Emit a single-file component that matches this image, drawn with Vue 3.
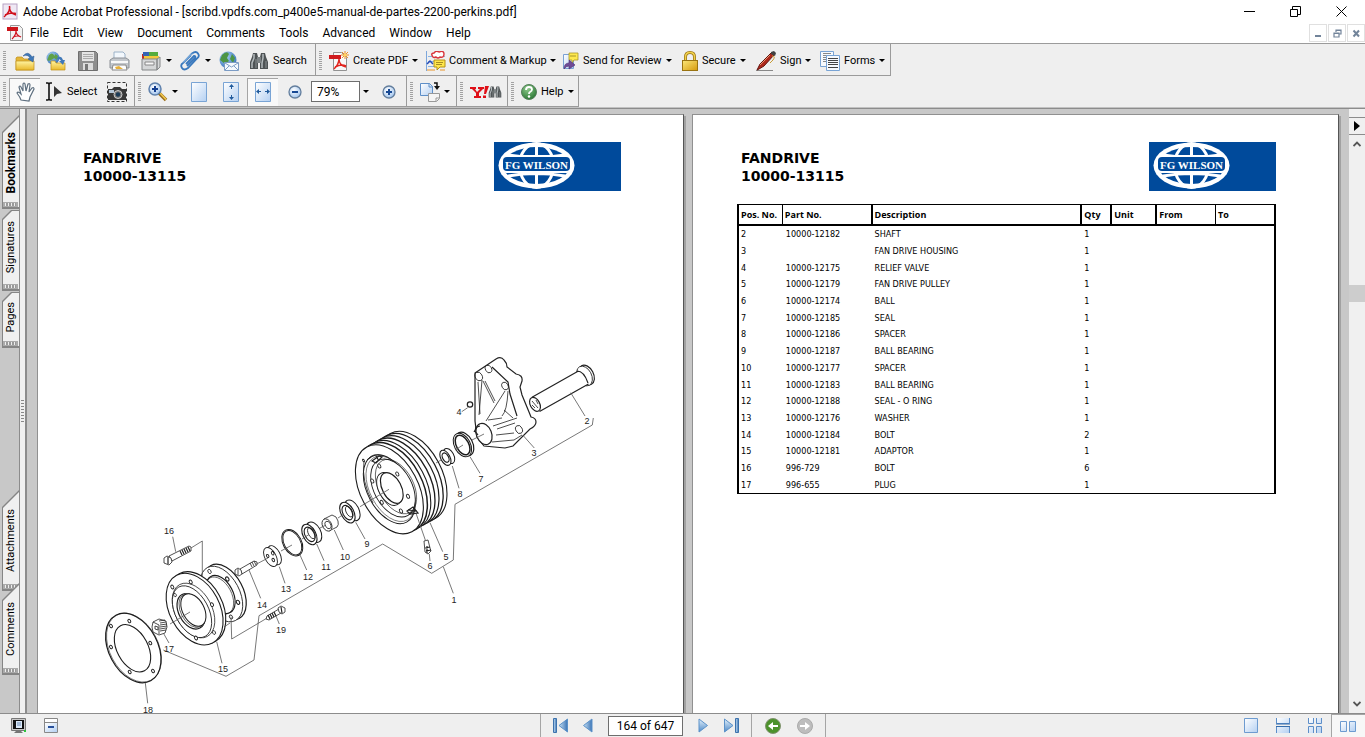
<script setup>
const menus = ['File', 'Edit', 'View', 'Document', 'Comments', 'Tools', 'Advanced', 'Window', 'Help']

const parts = [
  ['2', '10000-12182', 'SHAFT', '1'],
  ['3', '', 'FAN DRIVE HOUSING', '1'],
  ['4', '10000-12175', 'RELIEF VALVE', '1'],
  ['5', '10000-12179', 'FAN DRIVE PULLEY', '1'],
  ['6', '10000-12174', 'BALL', '1'],
  ['7', '10000-12185', 'SEAL', '1'],
  ['8', '10000-12186', 'SPACER', '1'],
  ['9', '10000-12187', 'BALL BEARING', '1'],
  ['10', '10000-12177', 'SPACER', '1'],
  ['11', '10000-12183', 'BALL BEARING', '1'],
  ['12', '10000-12188', 'SEAL - O RING', '1'],
  ['13', '10000-12176', 'WASHER', '1'],
  ['14', '10000-12184', 'BOLT', '2'],
  ['15', '10000-12181', 'ADAPTOR', '1'],
  ['16', '996-729', 'BOLT', '6'],
  ['17', '996-655', 'PLUG', '1'],
]

// Tilted discs: [cx, cy, rx, ry, stroke width, filled]
const discs = {
  gasket: [
    [133.3, 648, 24.4, 37.1, 1.2, 1], [134, 647.6, 24.2, 36.8, 0.5, 0], [132.5, 648.3, 15.5, 25.5, 1.1, 1],
    [129.3, 621, 1.3, 1.9, 1, 1], [111, 626, 1.3, 1.9, 1, 1], [111, 647, 1.3, 1.9, 1, 1],
    [129.7, 672, 1.3, 1.9, 1, 1], [153, 671, 1.3, 1.9, 1, 1], [150.3, 643, 1.3, 1.9, 1, 1],
  ],
  backFlange: [
    [225, 592, 18, 30, 1.2, 1], [221.5, 594, 18, 30, 0.8, 1], [220.5, 594.5, 12.5, 20.5, 1.1, 1],
    [219.5, 595.5, 12, 20, 0.6, 0],
    [209.5, 571.5, 1.5, 2.2, 0.8, 1], [227.3, 579, 1.5, 2.2, 1, 1], [238, 602.3, 1.5, 2.2, 1, 1], [231, 617, 1.5, 2.2, 0.8, 1],
  ],
  hub: [[211, 604, 9, 17, 0.8, 1], [208, 606, 10, 18, 0.6, 1], [205, 607, 11, 19, 0.8, 1]],
  frontFlange: [
    [197.2, 607.6, 25.2, 38.3, 1.1, 1], [194.6, 609.1, 25, 38.3, 1.1, 1],
    [193.5, 610.5, 18.4, 29.4, 0.7, 0], [192, 611.7, 16.6, 28, 0.8, 1], [191, 611.3, 12.2, 19, 1.2, 1],
    [192.2, 610.6, 11.4, 18.2, 0.6, 1], [193.4, 610, 10.8, 17.5, 1, 1],
    [172.3, 587, 1.4, 2, 0.9, 1], [190.7, 582, 1.4, 2, 0.9, 1], [212, 604.7, 1.4, 2, 0.9, 1],
    [214, 632.5, 1.4, 2, 0.8, 1], [196, 638, 1.4, 2, 0.9, 1], [175, 595, 1.2, 1.8, 0.8, 1],
  ],
  washer: [[274.5, 555.2, 5.6, 10.4, 0.9, 1], [270.5, 557, 5.6, 10.4, 0.9, 1], [272.7, 553.3, 1.2, 1.8, 0.9, 0], [267.7, 556, 1.1, 1.7, 0.9, 0], [273.3, 560, 1.2, 1.8, 0.9, 0]],
  oring: [[292.3, 542.7, 9.2, 14.2, 1, 0], [292.3, 542.7, 8.1, 13.1, 0.9, 0]],
  ring11: [[314, 532.2, 6.6, 11, 1, 1], [309.4, 534.5, 6.4, 11, 1.1, 1], [309.6, 534.4, 4.6, 7.8, 1.1, 1], [311.4, 533.2, 3, 6, 0.8, 0]],
  ring9: [[352.4, 510.3, 6.4, 11.2, 1, 1], [347.4, 512.6, 6.4, 11.2, 1.1, 1], [347.4, 512.6, 4.5, 7.8, 1.1, 1], [349.2, 511.6, 3, 5.8, 0.8, 0]],
  pulley: [
    [413, 475.8, 28.8, 48, 1.1, 1], [409.2, 478, 28.8, 48, 1.3, 1], [405, 480.3, 28.8, 48, 1.2, 1],
    [401, 482.6, 28.8, 48, 1.3, 1], [396.8, 485, 28.8, 48, 1.1, 1], [393.4, 487, 28.8, 48, 1.5, 1],
    [389.4, 489.3, 28.8, 48, 1.1, 1], [389.2, 489.3, 21.6, 37.2, 1, 1], [390.6, 488.8, 20.6, 35.4, 0.5, 0],
    [393, 488, 19, 31.2, 0.9, 1], [396, 486.6, 17.4, 29.4, 0.6, 0], [389, 489, 10.3, 17.8, 0.9, 1], [391.8, 488, 9.4, 16.6, 1.2, 1],
    [379.3, 466, 1.4, 2.2, 0.9, 1], [397.3, 474, 1.4, 2.2, 0.9, 1], [372.3, 481, 1.4, 2.2, 0.9, 1],
    [408, 496.3, 1.4, 2.2, 0.9, 1], [381.7, 502.3, 1.4, 2.2, 0.9, 1], [401, 511, 1.4, 2.2, 0.9, 1], [363.5, 460.5, 0.8, 1.4, 0.9, 1],
  ],
  ring8: [[449, 456, 4.8, 8.2, 1, 1], [445.4, 457.8, 4.6, 8.2, 1.1, 1], [445.6, 457.6, 2.9, 5, 1.2, 1]],
  ring7: [[464.6, 444, 8, 12.6, 1.2, 1], [462.4, 445, 8, 12.6, 1, 1], [462.6, 445, 6.2, 10.6, 1.5, 1]],
}
const smallParts = [...discs.washer, ...discs.oring, ...discs.ring11, ...discs.ring9, ...discs.ring8, ...discs.ring7]

const leaders = [
  '593.3,418 592.3,425 455,504.3 453.3,560 431.7,573.3 382.7,544 259,615.7 254,660 226,676.3 163.3,650',
  '443.3,566.7 453.3,593.3', '430,522.7 442.7,551.7', '416,513.3 425.3,540', '429.3,554 430,561',
  '470,456.7 480,473.3', '452.3,466 459,488.3', '355.7,522.3 365,539', '334.3,530 343.3,550',
  '316.7,544 324,560.7', '300,555 306.7,570', '279.3,566.7 285,583.3', '249,570 260.7,598.3',
  '276,616 279.3,624', '216.7,641.7 222,663.3', '145.3,682.7 147.7,703.3', '172.7,536.7 175.7,551.7',
  '191,548 202.3,541 202.3,576', '231,616.7 231.7,639 266.7,618.3', '163.3,633 169,643',
  '570.7,392.7 585,416', '522.7,435 534.3,448', '461.7,411.7 467.7,407.7',
  '389,489.3 360,506.7', '344,514 338,518', '326,525 320,528', '309,534.5 302,539', '292,545 281,551',
  '268,558 256.7,564', '441,460 436,463', '463,445 455,450', '484,434 472,440', '190,612 170,624',
  '224,627 230,623',
]

const callouts = [
  [1, 454, 603], [2, 587, 424], [3, 534, 456], [4, 459, 415], [5, 446, 560], [6, 430, 569], [7, 481, 482],
  [8, 460, 497], [9, 367, 547], [10, 345, 560], [11, 326, 570], [12, 308, 580], [13, 286, 592],
  [14, 262, 608], [15, 223, 672], [16, 169, 534], [17, 169, 652], [18, 148, 713], [19, 281, 633],
]
</script>

<template>
  <div class="window">
    <svg class="defs" width="0" height="0" aria-hidden="true">
      <defs>
        <linearGradient id="folder" x1="0" y1="0" x2="0" y2="1"><stop offset="0" stop-color="#fff3a0" /><stop offset="1" stop-color="#e9b92c" /></linearGradient>
        <linearGradient id="gold" x1="0" y1="0" x2="1" y2="1"><stop offset="0" stop-color="#fbe77a" /><stop offset="1" stop-color="#d69a0c" /></linearGradient>
        <linearGradient id="sheet" x1="0" y1="0" x2="1" y2="1"><stop offset="0" stop-color="#fff" /><stop offset="1" stop-color="#b4d0f2" /></linearGradient>
        <linearGradient id="arrow" x1="0" y1="0" x2="1" y2="0"><stop offset="0" stop-color="#c9e2f5" /><stop offset="1" stop-color="#3b74b5" /></linearGradient>
        <linearGradient id="arrowNext" x1="0" y1="0" x2="0" y2="1"><stop offset="0" stop-color="#e3f1fb" /><stop offset="1" stop-color="#4f8ac8" /></linearGradient>
        <radialGradient id="globe" cx=".35" cy=".3" r=".8"><stop offset="0" stop-color="#a9d1f5" /><stop offset="1" stop-color="#2f6bb5" /></radialGradient>
        <radialGradient id="green" cx=".4" cy=".3" r=".8"><stop offset="0" stop-color="#8cc98a" /><stop offset="1" stop-color="#22702c" /></radialGradient>
        <radialGradient id="lens" cx=".4" cy=".35" r=".8"><stop offset="0" stop-color="#fff" /><stop offset="1" stop-color="#8db8ea" /></radialGradient>
        <symbol id="binoculars" viewBox="0 0 20 20">
          <path d="M3 6l1-4h4l1 4v12H1v-7zM17 6l-1-4h-4l-1 4v12h8v-7z" fill="#4e5355" />
          <path d="M8 6h4v6H8z" fill="#7d8385" />
          <path d="M5 3v4l-2 5v5M14 3v4l-1 5v5" stroke="#b4bbbd" stroke-width="1.500" fill="none" />
          <path d="M7 8v9M17 10v7" stroke="#8b9294" fill="none" />
        </symbol>
        <symbol id="brand" viewBox="0 0 127 49">
          <rect width="127" height="49" fill="#004a9b" />
          <ellipse cx="42.5" cy="23.5" rx="38" ry="23" fill="#fff" />
          <ellipse cx="42.5" cy="23.5" rx="33.5" ry="18.5" fill="#004a9b" />
          <g fill="none" stroke="#fff" stroke-width="3">
            <ellipse cx="42.5" cy="23.5" rx="17" ry="22" />
            <path d="M42.5 2v43M14 13q28.500 5 57 0M14 34q28.500-5 57 0" />
          </g>
          <rect x="7" y="13" width="71" height="18" rx="5" fill="#fff" />
          <rect x="9" y="15" width="67" height="14" rx="4" fill="#004a9b" />
          <text x="42.500" y="27" text-anchor="middle" class="brand-text">FG WILSON</text>
        </symbol>
      </defs>
    </svg>

    <header class="titlebar">
      <svg width="17" height="17" viewBox="0 0 17 17" aria-hidden="true">
        <rect x="1" y="1" width="14" height="15" fill="#efe8f4" stroke="#b7a2c4" />
        <path d="M7.500 3c1 3-1 7-5.500 11M7.500 3C7 8 10 11 14 12M3 12c4-2 7-2.500 11-1.500" fill="none" stroke="#d0101c" stroke-width="1.5" />
      </svg>
      <h1 class="title">Adobe Acrobat Professional - [scribd.vpdfs.com_p400e5-manual-de-partes-2200-perkins.pdf]</h1>
      <div class="window-controls">
        <button type="button" aria-label="Minimize"><svg width="11" height="11" viewBox="0 0 11 11"><path d="M0 5.500h11" stroke="#000" /></svg></button>
        <button type="button" aria-label="Restore"><svg width="11" height="11" viewBox="0 0 11 11"><path d="M.5 3.500h7v7h-7zM2.500 3.500v-3h8v8h-3" fill="none" stroke="#000" /></svg></button>
        <button type="button" aria-label="Close"><svg width="11" height="11" viewBox="0 0 11 11"><path d="M.5.5l10 10M10.500.5l-10 10" stroke="#000" /></svg></button>
      </div>
    </header>

    <nav class="menubar">
      <svg width="16" height="16" viewBox="0 0 16 16" aria-hidden="true">
        <path d="M3.500.5h9l3 3v12h-12z" fill="#f2f2f2" stroke="#999" />
        <rect y="2" width="11" height="4" fill="#cc1419" />
        <path d="M9 6c0 3-2 6-4 8M9 6c0 4 2 5 5 6M6 12c3-1 5-2 8 0" fill="none" stroke="#d0101c" stroke-width="1.2" />
      </svg>
      <button v-for="m in menus" :key="m" type="button">{{ m }}</button>
      <div class="mdi-controls">
        <button type="button" aria-label="Minimize document"><svg width="9" height="9" viewBox="0 0 9 9"><path d="M1 7h6" stroke="#72849a" stroke-width="2" /></svg></button>
        <button type="button" aria-label="Restore document"><svg width="9" height="9" viewBox="0 0 9 9"><path d="M1 4h5v4H1zM3 3V1h5v4H6M3 1.500h5M1 4.500h5" fill="none" stroke="#72849a" stroke-width="1.200" /></svg></button>
        <button type="button" aria-label="Close document"><svg width="9" height="9" viewBox="0 0 9 9"><path d="M1.500 1.500l5.500 6M7 1.500l-5.500 6" stroke="#72849a" stroke-width="2" /></svg></button>
      </div>
    </nav>

    <div class="toolbars">
      <div class="toolbar">
        <div class="group files">
          <i class="grip"></i>
          <button type="button" aria-label="Open" class="tool first"><svg width="20" height="20" viewBox="0 0 20 20"><path d="M1 19V7l1-1h5l2 2h9v11z" fill="#e3b63a" stroke="#c08f19" stroke-width=".7" /><path d="M1 19V10h18v9z" fill="url(#folder)" stroke="#c08f19" stroke-width=".7" /><path d="M8 5q5-6 9 1l2-1-1 6-5-3 2-1q-2-4-7-2z" fill="#3f78b8" stroke="#28558c" stroke-width=".5" /></svg></button>
          <button type="button" aria-label="Open web page" class="tool"><svg width="21" height="20" viewBox="0 0 21 20"><circle cx="7" cy="7" r="6.500" fill="url(#globe)" /><path d="M3 4q3-3 5 0t-3 5-3-2zM9 3l3 2-1 4-3-2z" fill="#5ea149" /><path d="M5 19v-9h4l1 2h9v7z" fill="url(#folder)" stroke="#c08f19" stroke-width=".7" /><path d="M10 8q5-5 7 1h2l-2 5-4-4h2q-1-3-5-2z" fill="#3f78b8" /></svg></button>
          <button type="button" aria-label="Save" class="tool"><svg width="20" height="20" viewBox="0 0 20 20"><path d="M.5.500h17l2 2v17H.5z" fill="#8f8f8f" stroke="#6e6e6e" /><path d="M4 1h12v9H4z" fill="#e4e4e4" /><path d="M5 3.500h10M5 5.500h10M5 7.500h10" stroke="#aaa" /><path d="M5 12h10v7H5z" fill="#ddd" /><path d="M7 13h3v6H7z" fill="#777" /></svg></button>
          <button type="button" aria-label="Print" class="tool"><svg width="21" height="20" viewBox="0 0 21 20"><path d="M5 9V1h9l2 2v6z" fill="#f3f8fd" stroke="#9cb2c8" /><path d="M1 9l3-2h13l3 2v8H1z" fill="#c3c7cc" stroke="#8c9197" /><path d="M2 11h17" stroke="#f8f8f8" stroke-width="2" /><path d="M4 14h13l1 5H3z" fill="#fdfdfd" stroke="#888" /><path d="M6 16l4-1 4 3H7z" fill="#e7b03a" /></svg></button>
          <button type="button" aria-label="Organizer" class="tool dropdown organizer"><svg width="20" height="20" viewBox="0 0 20 20"><path d="M1 3h7v5H1z" fill="#c32b24" /><path d="M2 1h6v4H2z" fill="#3564b5" /><path d="M8 1h9v5H8z" fill="#56ac3e" /><path d="M3 5h15v4H3z" fill="#f3c83e" /><path d="M1 8h15v11H1zM16 8l3-2v10l-3 3z" fill="#d5d7d8" stroke="#858889" /><path d="M4 11h9v3H4z" fill="#f8f8f8" stroke="#888" /></svg><i class="caret"></i></button>
          <button type="button" aria-label="Attach" class="tool dropdown clip"><svg width="20" height="20" viewBox="0 0 20 20"><path d="M3 12L12 2.500q4-3 6 0t-1 5L8 17q-4 3-6 0t1-5l8-8M6 13l8-8q2 0 1 2l-8 8" fill="none" stroke="#3978bd" stroke-width="1.800" /><path d="M3 11.500l9-9" stroke="#a8ccee" /></svg><i class="caret"></i></button>
          <button type="button" aria-label="Email" class="tool email"><svg width="20" height="20" viewBox="0 0 20 20"><circle cx="9" cy="9" r="8.500" fill="url(#globe)" /><path d="M3 4q5-5 7-1l-2 4 2 3-4 3-5-4zM13 3l3 4-2 5-3-4z" fill="#4d9544" /><path d="M5.500 11.500h14v8h-14z" fill="#f5f9fe" stroke="#7c9cc5" /><path d="M6 12l6.500 4 6.500-4M6 19l4-4M19 19l-4-4" fill="none" stroke="#7c9cc5" /></svg></button>
          <button type="button" class="tool"><svg width="20" height="20"><use href="#binoculars" /></svg><span>Search</span></button>
        </div>
        <div class="group tasks">
          <i class="grip"></i>
          <button type="button" class="tool dropdown create"><svg width="20" height="20" viewBox="0 0 20 20"><path d="M4.500 1.500h8l5 5v13h-13z" fill="#f8f8f8" stroke="#929292" /><path d="M0 4h12v4H0z" fill="#d01b1e" /><path d="M10 8c0 4-2 7-5 10M10 8c0 5 3 7 7 8M6 16c4-2 7-3 11-1" fill="none" stroke="#e1251f" stroke-width="1.500" /><path d="M16 0v8M12 4h8M13 1l6 6M19 1l-6 6" stroke="#ee8e27" /><circle cx="16" cy="4" r="1.500" fill="#ffd65b" /></svg><span>Create PDF</span><i class="caret"></i></button>
          <button type="button" class="tool dropdown comment"><svg width="20" height="20" viewBox="0 0 20 20"><path d="M.5 0v20" stroke="#7da7db" /><path d="M2 5.500h17M2 10.500h17M2 15.500h17" stroke="#8ab3e5" /><path d="M7 6q-3-4 1-4 2-3 5-1 5-2 5 2 0 4-4 3-2 2-4 0-2 1-3 0z" fill="#fff" stroke="#d8333a" stroke-width="1.400" /><path d="M1 13l3-3 3 3" fill="none" stroke="#244ab7" stroke-width="1.500" /><path d="M8 9h11v7h-5l-3 3v-3H8z" fill="#ffe64a" stroke="#b49218" /><path d="M10 11.500h7M10 13.500h6" stroke="#a78d24" /><path d="M1 19h8M14 19h5" stroke="#edc28b" stroke-width="2" /></svg><span>Comment &amp; Markup</span><i class="caret"></i></button>
          <button type="button" class="tool dropdown send"><svg width="16" height="18" viewBox="0 0 16 18"><path d="M.5 2.500h10v14H.5z" fill="url(#sheet)" stroke="#7aa1d4" /><path d="M6 1h9v7h-4l-2 3V8H6z" fill="#ffe94d" stroke="#a8972a" stroke-width=".8" /><path d="M7 4h6" stroke="#a8972a" /><path d="M1 17q0-6 5-6V8l6 5-6 4v-3q-3 0-5 3z" fill="#704b96" stroke="#4b2b72" stroke-width=".6" /></svg><span>Send for Review</span><i class="caret"></i></button>
          <button type="button" class="tool dropdown secure"><svg width="16" height="20" viewBox="0 0 16 20"><path d="M3.500 11V6q0-4.500 4.500-4.500T12.500 6v5" fill="none" stroke="#9a7412" stroke-width="3" /><path d="M3.500 11V6q0-4.500 4.500-4.500T12.500 6v5" fill="none" stroke="#f0d04d" stroke-width="1.500" /><rect x=".5" y="9.500" width="15" height="10" fill="url(#gold)" stroke="#9a7412" /></svg><span>Secure</span><i class="caret"></i></button>
          <button type="button" class="tool dropdown sign"><svg width="20" height="20" viewBox="0 0 20 20"><path d="M0 19.500h17" stroke="#888" /><path d="M1 19l3-6L15 2l3 2-10 11-5 3z" fill="#ad281c" stroke="#651610" /><path d="M4 14l10-10" stroke="#e99675" /><path d="M15 1l3-1 2 2-1 3-4-2z" fill="#414141" /><path d="M16 5q4 0 1 4l-3 3" fill="none" stroke="#c99c37" /></svg><span>Sign</span><i class="caret"></i></button>
          <button type="button" class="tool dropdown"><svg width="20" height="20" viewBox="0 0 20 20"><path d="M.5.5h13v15H.5z" fill="#f7fafe" stroke="#79a4d5" /><path d="M3 2.500h8M3 4.500h8M3 6.500h8M3 8.500h8M3 10.500h8" stroke="#888" /><path d="M6.500 4.500h13v15h-13z" fill="#f7fafe" stroke="#79a4d5" /><path d="M8 7.500h10M8 9.500h10M8 11.500h10M8 13.500h10M8 16.500h10" stroke="#444" /></svg><span>Forms</span><i class="caret"></i></button>
        </div>
      </div>

      <div class="toolbar">
        <div class="group basic">
          <i class="grip"></i>
          <button type="button" aria-label="Hand tool" class="tool pressed"><svg width="19" height="20" viewBox="0 0 19 20"><path d="M5 18q-1-3-4-7 1-2 4 1L3 5q1-2 2 0l2 4V2q1-2 2 0l1 7 2-7q2-1 2 1l-1 7 3-4q2-1 2 1l-4 8-1 4z" fill="#fff" stroke="#5e6f7f" stroke-width="1.200" /></svg></button>
          <button type="button" class="tool select"><svg width="18" height="19" viewBox="0 0 18 19"><path d="M1 1h2l1 1 1-1h2M4 2v15M1 18h2l1-1 1 1h2" fill="none" stroke="#111" stroke-width="1.600" /><path d="M9 4v11l3-3 5-1z" fill="#333" /></svg><span>Select</span></button>
          <button type="button" aria-label="Snapshot" class="tool"><svg width="20" height="20" viewBox="0 0 20 20"><path d="M.5.5h19v19H.5z" fill="none" stroke="#333" stroke-dasharray="3 2" /><path d="M1 7h4l2-2h6l2 2h4v11H1z" fill="#383838" /><path d="M2 8h5v3H2z" fill="#b6c8d9" /><circle cx="11" cy="12.500" r="4" fill="#777" stroke="#ccc" /><circle cx="11" cy="12.500" r="2.200" fill="#1b3b58" /></svg></button>
        </div>
        <div class="group zooming">
          <i class="grip"></i>
          <button type="button" aria-label="Zoom" class="tool dropdown zoomer"><svg width="20" height="20" viewBox="0 0 20 20"><path d="M11 11l7 7" stroke="#9a6e1b" stroke-width="3.500" /><path d="M12 11l6 6.500" stroke="#f2c84e" stroke-width="1.600" /><circle cx="7" cy="7" r="6" fill="url(#lens)" stroke="#6082ad" stroke-width="1.500" /><path d="M4 7h6M7 4v6" stroke="#143f91" stroke-width="2" /></svg><i class="caret"></i></button>
          <button type="button" aria-label="Actual size" class="tool sheet"><svg width="16" height="20" viewBox="0 0 16 20"><path d="M.5.5h15v19H.5z" fill="url(#sheet)" stroke="#79a4d5" /></svg></button>
          <button type="button" aria-label="Fit page" class="tool sheet"><svg width="16" height="20" viewBox="0 0 16 20"><path d="M.5.5h15v19H.5z" fill="url(#sheet)" stroke="#79a4d5" /><path d="M8.500 3v4M8.500 13v4" stroke="#225c9d" /><path d="M6 5l2.500-3L11 5zM6 15l2.500 3 2.500-3z" fill="#225c9d" /></svg></button>
          <button type="button" aria-label="Fit width" class="tool pressed"><svg width="16" height="20" viewBox="0 0 16 20"><path d="M.5.5h15v19H.5z" fill="url(#sheet)" stroke="#79a4d5" /><path d="M2 9.500h4M10 9.500h4" stroke="#225c9d" /><path d="M4 7L1 9.500 4 12zM12 7l3 2.500-3 2.500z" fill="#225c9d" /></svg></button>
          <button type="button" aria-label="Zoom out" class="tool step"><svg width="14" height="14" viewBox="0 0 14 14"><circle cx="7" cy="7" r="6" fill="url(#lens)" stroke="#637e9d" stroke-width="1.300" /><path d="M4 7h6" stroke="#174994" stroke-width="2" /></svg></button>
          <input class="zoom-value" type="text" value="79%" aria-label="Zoom level">
          <button type="button" aria-label="Zoom levels" class="tool levels"><i class="caret"></i></button>
          <button type="button" aria-label="Zoom in" class="tool"><svg width="14" height="14" viewBox="0 0 14 14"><circle cx="7" cy="7" r="6" fill="url(#lens)" stroke="#637e9d" stroke-width="1.300" /><path d="M4 7h6M7 4v6" stroke="#174994" stroke-width="2" /></svg></button>
        </div>
        <div class="group rotate">
          <i class="grip"></i>
          <button type="button" aria-label="Rotate" class="tool dropdown"><svg width="20" height="20" viewBox="0 0 20 20"><path d="M.5 1.500h9l3 3v9H.5z" fill="url(#sheet)" stroke="#5e8fc8" /><path d="M9 1v4h4" fill="none" stroke="#5e8fc8" /><path d="M8.500 11.500h11v5l-3 3h-8z" fill="#f5f5f5" stroke="#999" /><path d="M16 19v-3h3" fill="none" stroke="#999" /><path d="M14 1h3v4" fill="none" stroke="#111" stroke-width="1.500" /><path d="M14 4h6l-3 4z" fill="#111" /></svg><i class="caret"></i></button>
        </div>
        <div class="group yahoo">
          <i class="grip"></i>
          <button type="button" aria-label="Yahoo search" class="tool"><svg width="32" height="14" viewBox="0 0 32 14"><path d="M0 2h6v2H5l2 3 3-3H8V2h6v2h-1L9 8v3h2v2H4v-2h2V8L2 4H0z" fill="#df1018" /><path d="M15 1h4l-3 8h-2zM13 10.500h3v2.500h-3z" fill="#df1018" /><svg x="18" y="0" width="14" height="14"><use href="#binoculars" /></svg></svg></button>
        </div>
        <div class="group help">
          <i class="grip"></i>
          <button type="button" class="tool dropdown"><svg width="16" height="16" viewBox="0 0 16 16"><circle cx="8" cy="8" r="7.500" fill="url(#green)" stroke="#557f5a" /><path d="M5 6q0-3 3-3t3 2.500Q11 7 9 8q-1 .5-1 2" fill="none" stroke="#fff" stroke-width="1.800" /><circle cx="8" cy="12.500" r="1.200" fill="#fff" /></svg><span>Help</span><i class="caret"></i></button>
        </div>
      </div>
    </div>

    <main class="workspace">
      <aside class="sidebar">
        <button type="button" class="tab bookmarks"><span>Bookmarks</span></button>
        <button type="button" class="tab signatures short"><span>Signatures</span></button>
        <button type="button" class="tab pages short"><span>Pages</span></button>
        <button type="button" class="tab attachments"><span>Attachments</span></button>
        <button type="button" class="tab comments"><span>Comments</span></button>
      </aside>
      <div class="splitter"><i></i></div>

      <div class="document">
        <section class="page">
          <div class="page-head">
            <h2>FANDRIVE<br>10000-13115</h2>
            <svg class="brand" viewBox="0 0 127 49" role="img" aria-label="FG Wilson"><use href="#brand" /></svg>
          </div>
          <svg class="diagram" viewBox="38 191 645 523" role="img" aria-label="Exploded view of the fan drive">
            <g v-for="k in ['gasket', 'backFlange', 'hub', 'frontFlange', 'pulley']" :key="k">
              <ellipse v-for="(d, i) in discs[k]" :key="i" :cx="d[0]" :cy="d[1]" :rx="d[2]" :ry="d[3]" :transform="`rotate(-28 ${d[0]} ${d[1]})`" :stroke-width="d[4]" :fill="d[5] ? '#fff' : 'none'" stroke="#1c1c1c" />
            </g>
            <ellipse v-for="(d, i) in smallParts" :key="i" :cx="d[0]" :cy="d[1]" :rx="d[2]" :ry="d[3]" :transform="`rotate(-28 ${d[0]} ${d[1]})`" :stroke-width="d[4]" :fill="d[5] ? '#fff' : 'none'" stroke="#1c1c1c" />

            <g class="ink">
              <!-- oil passages inside the pulley -->
              <path d="M372 461l7-5 3 1-6 6zM376 456l3 5M413 507l5 6-8 1-3-3zM408 510l9 1M410 513l6-2" class="bold" />
              <path d="M364 461q-3 20 9 42M367 460q6-8 16-4" />
              <!-- plug 17 -->
              <path d="M153 622l6-3 7 2 1 6-2 6-6 2-6-3-1-5z" class="solid" />
              <path d="M153 622l6 3v9M160 623l6-1M160 625l7-1M160 627l7-1M160 629l6-1M160 631l6-1M159 621l6-1M155 626l3 1v3l-3-1z" />
              <!-- spacer 10 -->
              <path d="M324 519l8-4q5 1 6 6 1 4-1 6l-8 4z" class="solid" />
              <ellipse cx="327" cy="525" rx="4.500" ry="6.500" transform="rotate(-28 327 525)" class="solid" />
              <ellipse cx="328" cy="525" rx="2.600" ry="4" transform="rotate(-28 328 525)" />
              <!-- bolt 14 -->
              <path d="M240 569l14-8 3 1 0 3-15 9z" class="solid" />
              <path d="M235 570l3-2 3 2 1 4-3 2-4-2zM250 563l2 4M252 562l2 4M254 561l2 4M238 569v6" class="solid" />
              <!-- bolt 16 -->
              <path d="M169 556l20-10 2 1v4l-19 10z" class="solid" />
              <path d="M164 558l3-2 4 2 1 4-3 3-5-2z" class="solid" />
              <path d="M180 551l2 4M182 550l2 4M184 549l2 4M186 548l2 4M188 547l2 4M168 557v7" class="bold" />
              <!-- bolt 19 -->
              <path d="M267 616l12-7 2 4-12 7-3-1z" class="solid" />
              <path d="M278 608l3-2 4 2v4l-3 2-3-2z" class="solid" />
              <path d="M268 615l2 4M270 614l2 4M272 613l2 4M274 612l2 4M281 607l1 6" class="bold" />
              <!-- valve 6 -->
              <path d="M424 541l4-1 2 8 1 3-3 3-3-2z" class="solid" />
              <path d="M425 548l5-1M426 551l5-1M427 546v7" class="bold" />
              <!-- ball 4 -->
              <circle cx="470" cy="404.500" r="2.700" class="bold" />
              <!-- shaft 2 -->
              <ellipse cx="586.500" cy="375" rx="7" ry="10.500" transform="rotate(-28 586.500 375)" class="solid bold" />
              <ellipse cx="584.500" cy="376" rx="7" ry="10.500" transform="rotate(-28 584.500 376)" class="solid" />
              <path d="M532 397.300l46-26q7 0 10 13l-49 27.500z" fill="#fff" stroke="none" />
              <path d="M532 397.300l46-26M539.500 411.500l49-27.500M577 371q7 0 11 12" class="bold" />
              <ellipse cx="535" cy="404.300" rx="4.700" ry="7.500" transform="rotate(-28 535 404.300)" class="solid bold" />
              <path d="M532 401l6 7M532 405l3 3M536 400l2 4" />
              <!-- housing 3 -->
              <path d="M475 373l21-14q5-3 8 1 3 3 3 7l9 7q7 1 6 7l-2 6 2 8 7 17 2 5q5 1 5 5t-6 7l-17 17-8 2-21-2-7-9-2-16z" class="solid bold" />
              <ellipse cx="478.700" cy="376.500" rx="3.500" ry="4.500" transform="rotate(-28 478.700 376.500)" />
              <ellipse cx="488.500" cy="369" rx="3" ry="4" transform="rotate(-28 488.500 369)" />
              <ellipse cx="505" cy="386" rx="3" ry="4" transform="rotate(-28 505 386)" />
              <ellipse cx="519" cy="429.500" rx="3.200" ry="4.200" transform="rotate(-28 519 429.500)" />
              <path d="M492 367l16 15 2 12 7 22" class="bold" />
              <path d="M478 382l2 32M482 380l-3 35M483 381l11 22M485 381l10 20M505 391l-19 30M508 391q-1 20-6 25M493 426l24-8M497 429l18-6M496 435l18-2M504 410l9 8M488 420l14-2" />
              <path d="M492 442l22-2 8-5" />
              <ellipse cx="484" cy="434" rx="7.600" ry="11" transform="rotate(-22 484 434)" class="solid bold" />
              <path d="M476 427l-1 4 3 4M474 432l3-5 3-1" class="bold" />
            </g>

            <polyline v-for="(l, i) in leaders" :key="i" :points="l" class="leader" />
            <text v-for="c in callouts" :key="c[0]" :x="c[1]" :y="c[2]" text-anchor="middle" class="callout">{{ c[0] }}</text>
          </svg>
        </section>

        <section class="page">
          <div class="page-head second">
            <h2>FANDRIVE<br>10000-13115</h2>
            <svg class="brand" viewBox="0 0 127 49" role="img" aria-label="FG Wilson"><use href="#brand" /></svg>
          </div>
          <div class="parts-wrap">
            <table class="parts">
              <thead>
                <tr><th class="pos">Pos. No.</th><th class="part thin">Part No.</th><th class="desc">Description</th><th class="qty">Qty</th><th class="unit">Unit</th><th class="from">From</th><th class="thin">To</th></tr>
              </thead>
              <tbody>
                <tr v-for="p in parts" :key="p[0]"><td>{{ p[0] }}</td><td>{{ p[1] }}</td><td>{{ p[2] }}</td><td>{{ p[3] }}</td><td></td><td></td><td></td></tr>
              </tbody>
            </table>
          </div>
        </section>
      </div>

      <div class="scrollbar">
        <div class="scroll-cap"></div>
        <button type="button" class="how-to" aria-label="Show pane"><svg width="6" height="10" viewBox="0 0 6 10"><path d="M0 0l6 5-6 5z" /></svg></button>
        <button type="button" class="scroll-arrow" aria-label="Scroll up"><svg width="8" height="6" viewBox="0 0 8 6"><path d="M.5 5L4 1.500 7.500 5" fill="none" stroke="#555" stroke-width="1.800" /></svg></button>
        <div class="track"><div class="thumb"></div></div>
        <button type="button" class="scroll-arrow" aria-label="Scroll down"><svg width="8" height="6" viewBox="0 0 8 6"><path d="M.5 1L4 4.500 7.500 1" fill="none" stroke="#555" stroke-width="1.800" /></svg></button>
      </div>
    </main>

    <footer class="statusbar">
      <div class="status-left">
        <button type="button" aria-label="Full screen"><svg width="16" height="16" viewBox="0 0 16 16"><path d="M.5.5h14v12H.5z" fill="#c9c9c9" stroke="#777" /><path d="M2 2h11v9H2z" fill="#111" /><path d="M5 3h6v7H5z" fill="#dce9f8" /><path d="M6 5h4M6 7h4" stroke="#6b8ab2" /><path d="M5 13h5l2 2H3z" fill="#777" /><path d="M13 13h2" stroke="#2cc43c" stroke-width="2" /></svg></button>
        <button type="button" aria-label="Hide toolbars"><svg width="14" height="15" viewBox="0 0 14 15"><path d="M.5.500h13v14H.5z" fill="#fff" stroke="#888" /><path d="M1 5h12v9H1z" fill="url(#sheet)" /><path d="M1 4.500h12" stroke="#888" /><path d="M4 9h6" stroke="#274f9b" stroke-width="2" /></svg></button>
      </div>
      <div class="navigation">
        <button type="button" aria-label="First page"><svg width="16" height="15" viewBox="0 0 16 15"><path d="M.5.5h3v14h-3z" fill="url(#arrow)" stroke="#3d72ad" /><path d="M14.500 1v13L6 7.500z" fill="url(#arrow)" stroke="#5c92c9" /></svg></button>
        <button type="button" aria-label="Previous page"><svg width="10" height="15" viewBox="0 0 10 15"><path d="M9 1v13L.5 7.500z" fill="url(#arrow)" stroke="#5c92c9" /></svg></button>
        <input type="text" value="164 of 647" aria-label="Page">
        <button type="button" aria-label="Next page"><svg width="10" height="15" viewBox="0 0 10 15"><path d="M1 1v13l8.500-6.500z" fill="url(#arrowNext)" stroke="#5c92c9" /></svg></button>
        <button type="button" aria-label="Last page"><svg width="16" height="15" viewBox="0 0 16 15"><path d="M1.500 1v13L10 7.500z" fill="url(#arrowNext)" stroke="#5c92c9" /><path d="M12.500.5h3v14h-3z" fill="url(#arrow)" stroke="#3d72ad" /></svg></button>
      </div>
      <div class="history">
        <button type="button" aria-label="Previous view"><svg width="16" height="16" viewBox="0 0 16 16"><circle cx="8" cy="8" r="7.500" fill="#4c922c" stroke="#80936f" /><path d="M3 8l5-4v3h5v2H8v3z" fill="#fff" /></svg></button>
        <button type="button" aria-label="Next view"><svg width="16" height="16" viewBox="0 0 16 16"><circle cx="8" cy="8" r="7.500" fill="#bdbdbd" stroke="#aaa" /><path d="M13 8L8 4v3H3v2h5v3z" fill="#fff" /></svg></button>
      </div>
      <div class="layouts">
        <button type="button" aria-label="Single page"><svg width="14" height="15" viewBox="0 0 14 15"><path d="M.5.500h13v14H.5z" fill="url(#sheet)" stroke="#6d9bd0" /></svg></button>
        <button type="button" aria-label="Continuous"><svg width="14" height="15" viewBox="0 0 14 15"><path d="M.5 0v5.500h13V0M.5 15V8.500h13V15" fill="url(#sheet)" stroke="#5c8ec9" /><path d="M0 6h14M0 8.500h14" stroke="#356dac" /></svg></button>
        <button type="button" aria-label="Continuous facing"><svg width="14" height="15" viewBox="0 0 14 15"><path d="M.5 0v5.500h5V0M8.500 0v5.500h5V0M.5 15V8.500h5V15M8.500 15V8.500h5V15" fill="url(#sheet)" stroke="#5c8ec9" /></svg></button>
        <button type="button" aria-label="Facing" class="active"><svg width="16" height="11" viewBox="0 0 16 11"><path d="M.5.500h6v10h-6zM9.500.500h6v10h-6z" fill="url(#sheet)" stroke="#6d9bd0" /></svg></button>
      </div>
    </footer>
  </div>
</template>

<style>
html, body { margin: 0; }
body { overflow: hidden; }
</style>

<style scoped>
.window { display: flex; flex-direction: column; height: 100vh; background: #fff; color: #000; font: 11px Roboto, sans-serif; }
.defs { position: absolute; }
svg { display: block; flex: none; }
button { display: flex; align-items: center; padding: 0; border: 0; background: none; color: inherit; font: inherit; white-space: nowrap; }
input { box-sizing: border-box; border: 1px solid #6e6e6e; background: #fff; color: #000; font: 12px Roboto, sans-serif; }

.titlebar { display: flex; align-items: center; height: 23px; padding-left: 2px; }
.title { margin: 0 0 0 4px; font: 12px/20px Roboto, sans-serif; white-space: nowrap; }
.window-controls { display: flex; gap: 35px; margin-left: auto; padding-right: 18px; }

.menubar { display: flex; align-items: center; gap: 14px; height: 20px; padding-left: 7px; font: 12px Roboto, sans-serif; }
.menubar > svg { margin-right: -7px; }
.mdi-controls { display: flex; gap: 1px; margin-left: auto; }
.mdi-controls button { box-sizing: border-box; justify-content: center; width: 18px; height: 18px; border: 1px solid #e0e0e0; }

.toolbars { border-top: 1px solid #9b9b9b; border-bottom: 1px solid #8c8c8c; background: #efefef; }
.toolbar { display: flex; height: 31px; }
.toolbar + .toolbar { height: 32px; border-bottom: 1px solid #c2c2c2; }
.group { box-sizing: border-box; display: flex; align-items: center; height: 32px; padding: 2px 0 0 3px; border-right: 1px solid #9b9b9b; border-bottom: 1px solid #9b9b9b; }
.grip { flex: none; width: 3px; height: 20px; background: repeating-linear-gradient(#a2a2a2 0 1px, #efefef 1px 2px); }
.caret { flex: none; width: 0; height: 0; border: solid transparent; border-width: 3px 3px 0; border-top-color: #000; }
.tool { flex: none; gap: 4px; }
.files { width: 316px; }
.files .tool { margin-right: 11px; }
.files .tool.first { margin-left: 9px; }
.files .organizer, .files .clip { gap: 5px; width: 30px; margin-right: 9px; }
.files .email { margin-right: 10px; }
.tasks { width: 575px; }
.tasks .tool { gap: 4px; margin-right: 9px; }
.tasks .create { width: 88px; margin-left: 7px; }
.tasks .comment { gap: 3px; width: 130px; margin-right: 7px; }
.tasks .send { width: 110px; }
.tasks .secure { width: 65px; }
.tasks .sign { width: 55px; }

.basic { width: 135px; }
.pressed { box-sizing: border-box; justify-content: center; width: 31px; height: 28px; border: solid #a5a5a5; border-width: 1px 0 0 1px; background: #f9f9f9; }
.basic .pressed { margin-left: 3px; }
.basic .select { margin: 0 10px 0 5px; }
.zooming { width: 272px; }
.zoomer { gap: 4px; width: 31px; margin: 0 12px 0 7px; }
.sheet { margin-right: 16px; }
.sheet + .sheet { margin-right: 8px; }
.step { margin: 0 9px 0 10px; }
.zoom-value { width: 49px; height: 21px; padding: 0 5px; }
.levels { margin: 0 13px 0 3px; }
.rotate { width: 50px; }
.rotate .tool { margin-left: 7px; }
.yahoo { width: 51px; }
.yahoo .tool { margin-left: 7px; }
.help { width: 71px; }
.help .tool { margin-left: 7px; }

.workspace { display: flex; flex: 1; min-height: 0; background: #c8c8c8; }
.sidebar { display: flex; flex-direction: column; width: 17px; padding: 6px 0 0 2px; }
.tab { position: relative; box-sizing: border-box; flex: none; justify-content: center; width: 17px; background: #858585; clip-path: polygon(0 17px, 17px 0, 100% 0, 100% 100%, 0 100%); }
.tab.short { padding-bottom: 6px; clip-path: polygon(0 9px, 9px 0, 100% 0, 100% 100%, 0 100%); }
.tab::before { position: absolute; inset: 1px 0 2px 1px; background: #f0f0f0; clip-path: polygon(0 17px, 17px 0, 100% 0, 100% 100%, 0 100%); content: ""; }
.tab.short::before { clip-path: polygon(0 9px, 9px 0, 100% 0, 100% 100%, 0 100%); }
.tab::after { position: absolute; right: 1px; bottom: 2px; left: 1px; height: 5px; background: repeating-linear-gradient(90deg, #eee 0 1px, #999 1px 3px); border: solid #aaa; border-width: 1px 2px; box-sizing: border-box; content: ""; }
.tab span { position: relative; writing-mode: vertical-rl; transform: rotate(180deg); }
.bookmarks { height: 94px; padding-top: 2px; font-size: 12px; font-weight: 700; }
.signatures { height: 81px; margin-top: 1px; }
.pages { height: 56px; margin-top: 1px; }
.attachments { height: 101px; margin-top: 142px; }
.comments { height: 92px; margin-top: -8px; }
.splitter { box-sizing: border-box; display: flex; align-items: center; justify-content: center; width: 8px; border: solid #8c8c8c; border-width: 0 2px 0 1px; background: #f0f0f0; }
.splitter i { width: 3px; height: 22px; background: repeating-linear-gradient(#888 0 1px, #f0f0f0 1px 3px); }

.document { display: grid; flex: 1; grid-template-columns: 1fr 1fr; gap: 8px; min-width: 0; padding: 5px 10px 0; overflow: hidden; }
.page { min-width: 0; min-height: 100%; border: 1px solid #909090; border-right-color: #555; border-bottom: 0; background: #fff; box-shadow: 2px 2px 0 #a2a2a2; }
.page-head { display: flex; justify-content: space-between; padding: 27px 62px 0 45px; }
.page-head.second { padding-left: 48px; }
.page-head h2 { margin: 7px 0 0; font: bold 14px/18px "DejaVu Sans", sans-serif; }
.brand { width: 127px; height: 49px; }
.brand-text { fill: #fff; font: bold 11px "Liberation Serif", serif; }
.diagram { width: 100%; }
.ink { fill: none; stroke: #222; stroke-width: .8; }
.ink .solid { fill: #fff; }
.ink .bold { stroke-width: 1.2; }
.leader { fill: none; stroke: #555; stroke-width: .8; }
.callout { fill: #222; font: 9px "Liberation Sans", sans-serif; }

.parts-wrap { padding: 13px 62px 0 44px; }
.parts { width: 100%; height: 290px; table-layout: fixed; border: solid #000; border-width: 1px 2px 1px; border-spacing: 0; box-sizing: border-box; font: 9px/12px "DejaVu Sans Condensed", "DejaVu Sans", sans-serif; }
.parts th { box-sizing: border-box; height: 21px; padding: 0 0 0 2px; border-bottom: 2px solid #000; border-left: 2px solid #000; font: bold 9px/12px "Open Sans", sans-serif; text-align: left; white-space: nowrap; }
.parts th:first-child { border-left: 0; }
.parts th.thin { border-left-width: 1px; }
.parts td { padding: 0 0 0 4px; white-space: nowrap; }
.parts td:first-child { padding-left: 2px; }
.parts .pos { width: 8%; }
.parts .part { width: 16.6%; }
.parts .desc { width: 39.2%; }
.parts .qty { width: 5.6%; }
.parts .unit { width: 8.4%; }
.parts .from { width: 11.2%; }

.scrollbar { display: flex; flex-direction: column; width: 16px; background: #f0f0f0; }
.scroll-cap { height: 8px; border-bottom: 1px solid #8c8c8c; }
.how-to { justify-content: center; height: 17px; border-bottom: 1px solid #8c8c8c; }
.scroll-arrow { justify-content: center; height: 18px; }
.track { display: flex; flex: 1; flex-direction: column; }
.thumb { height: 17px; margin-top: 132px; background: #cdcdcd; }

.statusbar { display: flex; align-items: stretch; height: 23px; border-top: 1px solid #8c8c8c; background: #efefef; }
.status-left { box-sizing: border-box; display: flex; flex: 1 1 0; gap: 17px; padding-left: 11px; }
.navigation { display: flex; align-items: center; justify-content: space-between; box-sizing: border-box; width: 212px; padding: 0 12px; border: solid #a5a5a5; border-width: 0 1px; }
.navigation input { width: 75px; height: 20px; padding: 0; text-align: center; }
.history { display: flex; gap: 16px; box-sizing: border-box; width: 74px; padding-left: 13px; border-right: 1px solid #a5a5a5; }
.layouts { box-sizing: border-box; display: flex; flex: 1 1 0; justify-content: flex-end; gap: 18px; padding-left: 11px; }
.layouts .active { justify-content: center; width: 34px; margin-left: -9px; padding-right: 2px; border: solid #a5a5a5; border-width: 1px 0 0 1px; box-sizing: border-box; background: #f7f7f7; }
</style>
